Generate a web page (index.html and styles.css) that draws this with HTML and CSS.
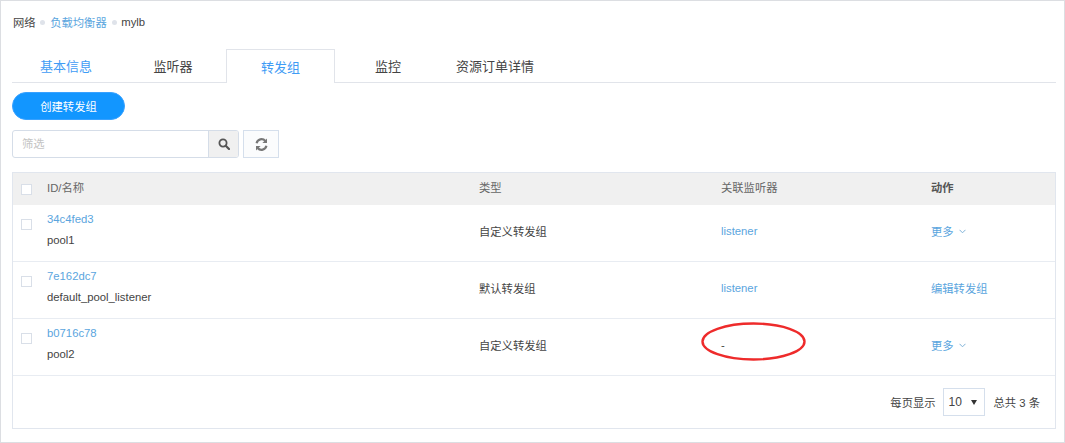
FILE: index.html
```html
<!DOCTYPE html>
<html lang="zh">
<head>
<meta charset="utf-8">
<title>mylb</title>
<link rel="stylesheet" href="styles.css">
</head>
<body>
<div class="frame">
  <nav class="crumbs">
    <span>网络</span><i class="dot"></i><a>负载均衡器</a><i class="dot"></i><span>mylb</span>
  </nav>
  <div class="tabs">
    <a class="tab link">基本信息</a>
    <a class="tab">监听器</a>
    <a class="tab active">转发组</a>
    <a class="tab">监控</a>
    <a class="tab">资源订单详情</a>
  </div>
  <button class="create">创建转发组</button>
  <div class="filters">
    <div class="search">
      <span class="placeholder">筛选</span>
      <span class="search-btn">
        <svg width="12" height="12" viewBox="0 0 12 12"><circle cx="5" cy="5" r="3.6" fill="none" stroke="#555" stroke-width="1.8"/><path d="M7.7 7.7L11 11" stroke="#555" stroke-width="2.2" stroke-linecap="round"/></svg>
      </span>
    </div>
    <span class="refresh">
      <svg width="13" height="13" viewBox="0 0 13 13" fill="none"><path d="M1.6 5.2A5 5 0 0 1 10.3 3" stroke="#777" stroke-width="2.200"/><path d="M12 .4V5H7.400z" fill="#777"/><path d="M11.4 7.8A5 5 0 0 1 2.7 10" stroke="#777" stroke-width="2.200"/><path d="M1 12.600V8H5.600z" fill="#777"/></svg>
    </span>
  </div>
  <div class="table">
    <div class="row head">
      <span class="check"></span><span>ID/名称</span><span>类型</span><span>关联监听器</span><span class="bold">动作</span>
    </div>
    <div class="row">
      <span class="check top"></span>
      <div class="name"><a>34c4fed3</a><span>pool1</span></div>
      <span>自定义转发组</span><a>listener</a>
      <a class="more">更多<svg width="7" height="5" viewBox="0 0 7 5"><path d="M.5 .8L3.5 3.8 6.5 .8" fill="none" stroke="#7fb2d8"/></svg></a>
    </div>
    <div class="row">
      <span class="check top"></span>
      <div class="name"><a>7e162dc7</a><span>default_pool_listener</span></div>
      <span>默认转发组</span><a>listener</a>
      <a>编辑转发组</a>
    </div>
    <div class="row">
      <span class="check top"></span>
      <div class="name"><a>b0716c78</a><span>pool2</span></div>
      <span>自定义转发组</span><span>-</span>
      <a class="more">更多<svg width="7" height="5" viewBox="0 0 7 5"><path d="M.5 .8L3.5 3.8 6.5 .8" fill="none" stroke="#7fb2d8"/></svg></a>
    </div>
    <div class="pager">
      <span>每页显示</span>
      <span class="select">10<i class="caret"></i></span>
      <span>总共 3 条</span>
    </div>
  </div>
  <svg class="mark" width="110" height="44" viewBox="0 0 110 44"><ellipse cx="54.500" cy="21.500" rx="51" ry="18" fill="none" stroke="#ee2b2b" stroke-width="2.400"/></svg>
</div>
</body>
</html>
```
FILE: styles.css
```css
* { box-sizing: border-box; }
html, body { margin: 0; padding: 0; }
body {
  width: 1065px;
  height: 443px;
  overflow: hidden;
  background: #fff;
  font-family: "Liberation Sans", "Noto Sans CJK SC", sans-serif;
  font-size: 11.3px;
  color: #444;
}
a { color: #5aa5de; }
.frame {
  position: relative;
  height: 443px;
  border: 1px solid #dcdee2;
  padding: 0 8px 0 11px;
}
.crumbs {
  display: flex;
  align-items: center;
  height: 16px;
  margin-top: 13px;
  margin-left: 1px;
  gap: 4.800px;
}
.dot { width: 5px; height: 5px; border-radius: 50%; background: #dfe3ea; }
.tabs {
  display: flex;
  height: 34px;
  margin-top: 19px;
  border-bottom: 1px solid #e1e4ea;
  font-size: 13px;
}
.tab {
  color: #444;
  text-align: center;
  line-height: 35px;
}
.tab:nth-child(1) { width: 108px; }
.tab:nth-child(2) { width: 106px; }
.tab:nth-child(3) {
  width: 109px;
  height: 34px;
  line-height: 35px;
  background: #fff;
  border: 1px solid #e1e4ea;
  border-bottom: 0;
}
.tab:nth-child(4) { width: 106px; }
.tab:nth-child(5) { width: 108px; }
.tab.link, .tab.active { color: #3f9cf5; }
.create {
  display: block;
  width: 113px;
  height: 28px;
  margin-top: 9px;
  border: 1px solid #38a1ff;
  border-radius: 14px;
  background: #1296ff;
  color: #fff;
  font: inherit;
  padding: 0;
}
.filters {
  display: flex;
  gap: 4px;
  margin-top: 10px;
  height: 28px;
}
.search {
  display: flex;
  width: 227px;
  border: 1px solid #d5dde8;
  border-radius: 3px;
  overflow: hidden;
}
.placeholder { flex: 1; padding-left: 9px; line-height: 26px; color: #c4c4c4; }
.search-btn {
  width: 30px;
  display: flex;
  align-items: center;
  justify-content: center;
  background: #f0f0f0;
  border-left: 1px solid #d5dde8;
}
.refresh {
  width: 36px;
  display: flex;
  align-items: center;
  justify-content: center;
  border: 1px solid #d5dfec;
  background: #fbfcfd;
}
.table {
  margin-top: 14px;
  width: 1044px;
  border: 1px solid #e1e6ee;
}
.row {
  display: grid;
  grid-template-columns: 34px 432px 242px 210px 1fr;
  align-items: center;
  height: 57px;
  padding-bottom: 4px;
  border-bottom: 1px solid #e8ecf2;
}
.row.head {
  height: 32px;
  padding-bottom: 5px;
  background: #f0f0f0;
  color: #666;
  border-bottom: 0;
}
.row.head .bold { color: #555; font-weight: 700; }
.check {
  display: block;
  width: 11px;
  height: 11px;
  margin-left: 8px;
  background: #fff;
  border: 1px solid #d9dfe8;
}
.row.head .check { margin-top: 5px; }
.check.top { align-self: start; margin-top: 14px; }
.name { display: flex; flex-direction: column; gap: 7px; margin-top: -4px; }
.name a, .name span { line-height: 14px; }
.more { display: flex; align-items: center; gap: 5px; }
.pager {
  display: flex;
  justify-content: flex-end;
  align-items: center;
  height: 52px;
  padding-right: 15px;
  gap: 7px;
}
.select {
  position: relative;
  width: 42px;
  height: 28px;
  margin-right: 2px;
  padding-left: 5px;
  font-size: 12px;
  line-height: 26px;
  border: 1px solid #d5dfec;
}
.caret {
  position: absolute;
  right: 7px;
  top: 11px;
  border-left: 3px solid transparent;
  border-right: 3px solid transparent;
  border-top: 5px solid #333;
}
.mark { position: absolute; left: 698px; top: 319px; }
```
